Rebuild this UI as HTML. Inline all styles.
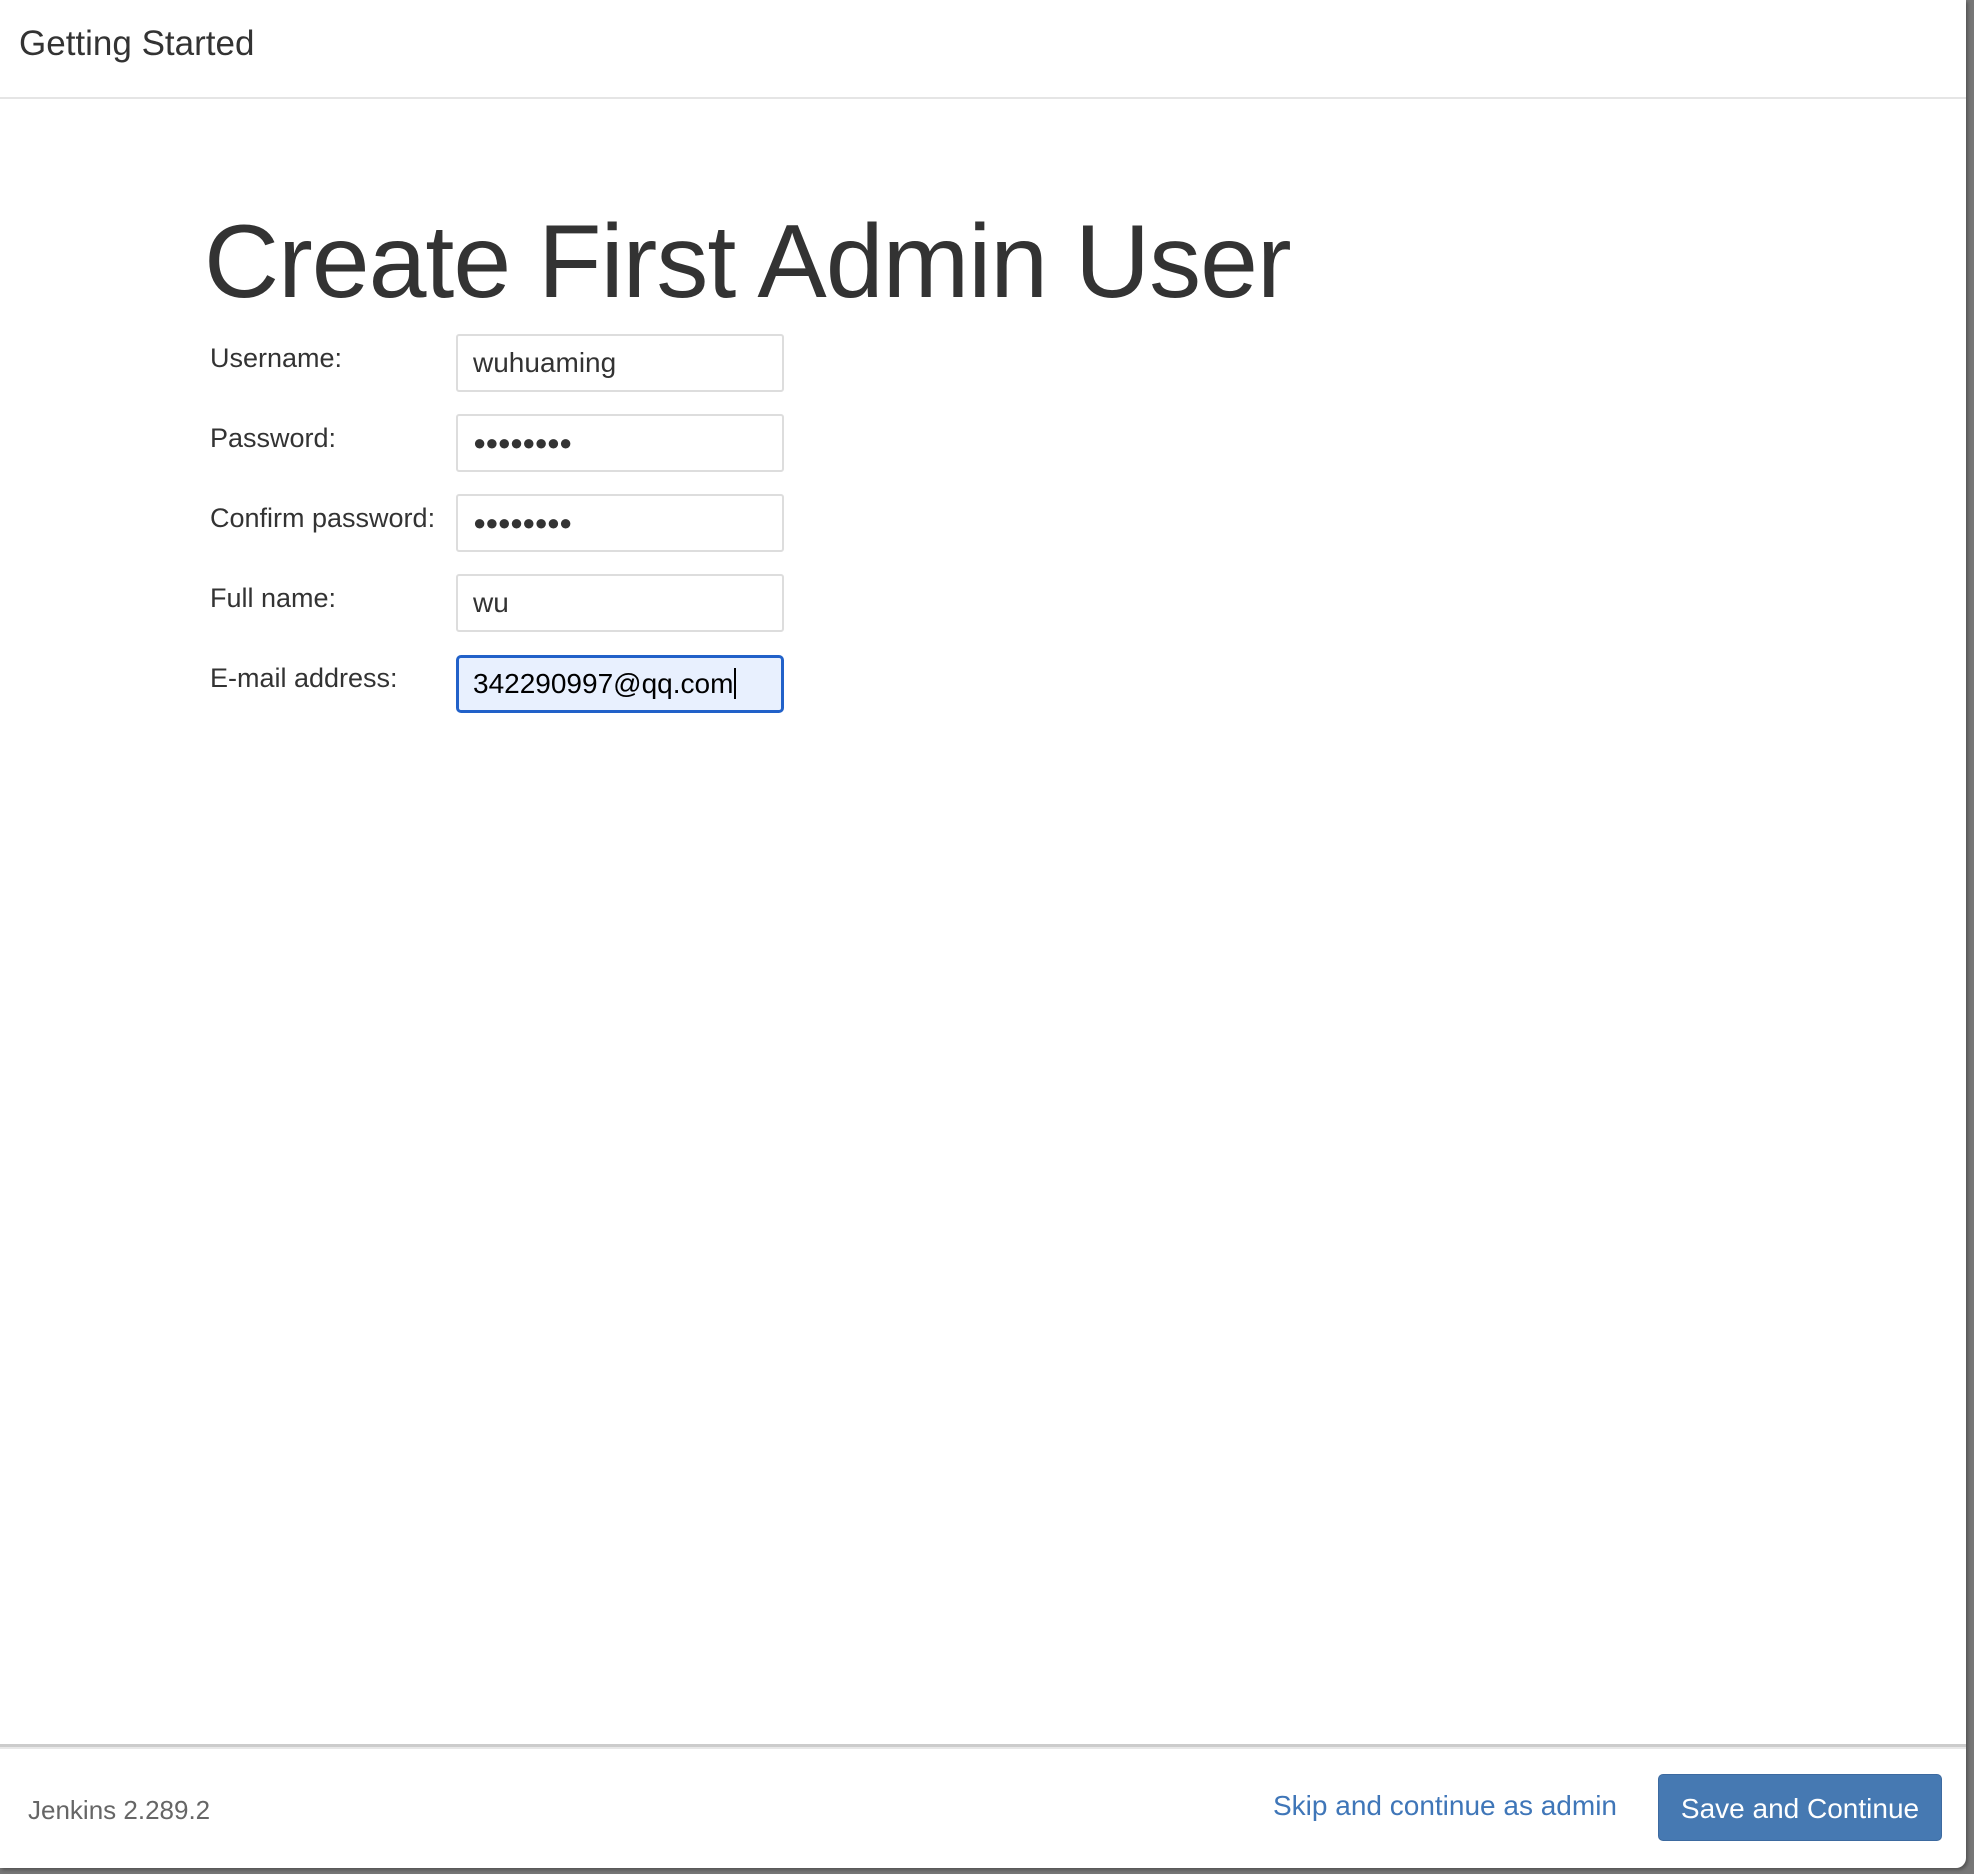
<!DOCTYPE html>
<html><head><meta charset="utf-8"><style>
html,body{margin:0;padding:0;}
body{width:1974px;height:1874px;background:#777;position:relative;overflow:hidden;font-family:"Liberation Sans",Arial,sans-serif;}
.panel{position:absolute;left:0;top:0;width:1966px;height:1868px;background:#fff;border-bottom-right-radius:10px;box-shadow:2px 2px 3px #555;}
.hdr{position:absolute;left:0;top:0;width:1966px;height:97px;border-bottom:2px solid #e5e5e5;}
.hdr span{position:absolute;left:19px;top:24px;font-size:35px;color:#333;}
h1{position:absolute;left:204px;top:210px;margin:0;font-size:104px;font-weight:normal;color:#333;letter-spacing:-1px;line-height:1;}
.lbl{position:absolute;left:210px;font-size:27px;color:#333;}
.inp{position:absolute;left:456px;width:323px;height:54px;border:2px solid #ddd;border-radius:3px;box-sizing:content-box;font-size:28px;color:#333;line-height:54px;padding-left:15px;box-sizing:border-box;width:328px;height:58px;}
.dots{font-size:22px;letter-spacing:-1px;}
.focus{border:3px solid #2161c9;background:#e8f0fe;color:#000;border-radius:5px;}
.ft{position:absolute;left:0;top:1744px;width:1966px;height:3px;background:#ccc;border-bottom:2px solid #e8e8e8;}
.ver{position:absolute;left:28px;top:1795px;font-size:26px;color:#666;}
.skip{position:absolute;left:1273px;top:1790px;font-size:28px;color:#3f76b8;}
.btn{position:absolute;left:1658px;top:1774px;width:284px;height:67px;background:#4679b2;border:1px solid #3d6aa0;border-radius:5px;color:#fff;font-size:28px;line-height:67px;text-align:center;box-sizing:border-box;}
</style></head><body>
<div class="panel">
<div class="hdr"><span>Getting Started</span></div>
<h1>Create First Admin User</h1>
<div class="lbl" style="top:343px">Username:</div>
<div class="inp" style="top:334px">wuhuaming</div>
<div class="lbl" style="top:423px">Password:</div>
<div class="inp dots" style="top:414px">●●●●●●●●</div>
<div class="lbl" style="top:503px">Confirm password:</div>
<div class="inp dots" style="top:494px">●●●●●●●●</div>
<div class="lbl" style="top:583px">Full name:</div>
<div class="inp" style="top:574px">wu</div>
<div class="lbl" style="top:663px">E-mail address:</div>
<div class="inp focus" style="top:655px;line-height:52px;padding-left:14px">342290997@qq.com<span style="border-left:2px solid #000;margin-left:1px"></span></div>
<div class="ft"></div>
<div class="ver">Jenkins 2.289.2</div>
<div class="skip">Skip and continue as admin</div>
<div class="btn">Save and Continue</div>
</div>
</body></html>
